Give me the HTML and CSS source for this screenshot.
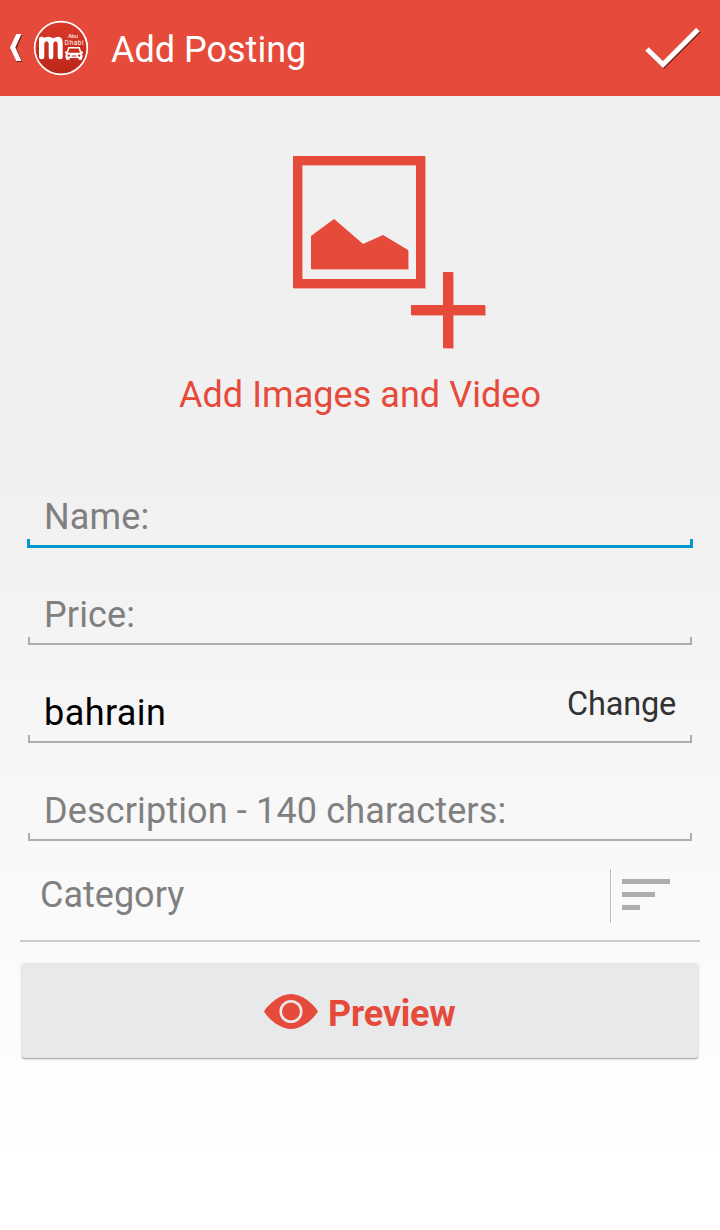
FILE: index.html
```html
<!DOCTYPE html>
<html lang="en">
<head>
<meta charset="utf-8">
<title>Add Posting</title>
<link rel="stylesheet" href="styles.css">
</head>
<body>
<header class="bar">
  <svg class="back" width="14" height="32" viewBox="0 0 14 32"><path d="M8 3h5.500L7.500 16.500 13.500 30H8L2 16.500z" fill="#6b241d"/><path d="M7.300 2h5.200L6.300 15.500 12.500 29H7.300L1 15.500z" fill="#fff"/></svg>
  <svg class="logo" width="56" height="56" viewBox="0 0 56 56">
    <defs><linearGradient id="disc" x1="0" y1="0" x2="0" y2="1"><stop offset="0" stop-color="#dc382b"/><stop offset="1" stop-color="#b92718"/></linearGradient></defs>
    <circle cx="28" cy="28" r="26.300" fill="url(#disc)" stroke="#fff" stroke-width="1.700"/>
    <path d="M5.300 18.500q0-2 2-2h1.200q1.500 0 1.800 1.300 5-3 9 .2 9.500-4.500 9.700 4.500v14q0 2.500-2.500 2.500t-2.500-2.500V23.500q0-2.500-2.200-2.500t-2.200 2.500v13q0 2.500-2.300 2.500t-2.300-2.500v-13q0-2.500-2.200-2.500t-2.200 2.500v13q0 2.500-2.600 2.500t-2.700-2.500z" fill="#fff" transform="translate(.7 .3)"/>
    <text class="logo-text" x="35" y="17.800" font-size="6" textLength="10">Abu</text>
    <text class="logo-text" x="31.600" y="25" font-size="6.600" textLength="19">Dhabi</text>
    <path d="M34.300 32.500l1.500-4.700h10.400l1.500 4.700" fill="none" stroke="#fff" stroke-width="1.500"/>
    <path d="M32 31.500h2.500v1.200h13v-1.200H50v1.700l-1.500.5 1 1.300v3H49v1.700h-3.500V38h-9v1.700H33V38h-.5v-3l1-1.300-1.500-.5z" fill="#fff"/>
    <circle cx="35.800" cy="35.600" r="1.200" fill="#c52d20"/><circle cx="46.200" cy="35.600" r="1.200" fill="#c52d20"/><path d="M38.500 36h5" stroke="#c52d20" stroke-width="1"/>
  </svg>
  <h1 class="title">Add Posting</h1>
  <svg class="done" width="56" height="44" viewBox="0 0 56 44"><path d="M3 23L19 38.500 54 3.500" fill="none" stroke="#6b241d" stroke-width="5"/><path d="M2 22L18 37.500 53 2.500" fill="none" stroke="#fff" stroke-width="5"/></svg>
</header>
<main class="page">
  <section class="media">
    <svg class="media-icon" width="194" height="194" viewBox="0 0 194 194">
      <g fill="#f1978d" transform="translate(.8 .8)"><path d="M0 0h132v132H0zM9 9v114h114V9z" fill-rule="evenodd"/><path d="M18 80L41 63 70 88 90 79 115 94v19H18z"/><path d="M150 116h10v33h32v10h-32v33h-10v-33h-32v-10h32z"/></g>
      <g fill="#e64a3a"><path d="M0 0h132v132H0zM9 9v114h114V9z" fill-rule="evenodd"/><path d="M18 80L41 63 70 88 90 79 115 94v19H18z"/><path d="M150 116h10v33h32v10h-32v33h-10v-33h-32v-10h32z"/></g>
    </svg>
    <p class="media-label">Add Images and Video</p>
  </section>
  <section class="fields">
    <div class="field active"><div class="row"><span class="hint">Name:</span></div><div class="bracket"></div></div>
    <div class="field"><div class="row"><span class="hint">Price:</span></div><div class="bracket"></div></div>
    <div class="field"><div class="row filled"><span class="value">bahrain</span><span class="change">Change</span></div><div class="bracket"></div></div>
    <div class="field"><div class="row"><span class="hint">Description - 140 characters:</span></div><div class="bracket"></div></div>
  </section>
  <section class="category">
    <span class="category-label">Category</span>
    <div class="sort"><i class="line long"></i><i class="line mid"></i><i class="line short"></i></div>
  </section>
  <div class="preview">
    <svg class="eye" width="54" height="35" viewBox="0 0 54 35"><path d="M0 17.500C5 9 17 0 27 0s22 9 27 17.500C49 26 37 35 27 35S5 26 0 17.500z" fill="#e64a3a"/><circle cx="27" cy="17.500" r="10.300" fill="none" stroke="#e8e9eb" stroke-width="2.600"/></svg>
    <span class="preview-label">Preview</span>
  </div>
</main>
</body>
</html>
```
FILE: styles.css
```css
* { box-sizing: border-box; }
body {
  margin: 0;
  height: 1230px;
  font: 36px/42px Roboto, sans-serif;
  color: #808080;
  background: #fff;
  overflow: hidden;
}
svg { display: block; flex: none; }
.bar {
  display: flex;
  align-items: flex-start;
  height: 96px;
  padding-left: 9px;
  background: #e64a3a;
}
.back { margin-top: 32px; }
.logo { margin: 20px 0 0 10px; }
.logo-text { font-family: Roboto, sans-serif; fill: #fff; }
.title { margin: 29px auto 0 22px; font-size: 36px; font-weight: 400; color: #fff; }
.done { margin: 27px 19px 0 0; }
.page {
  height: 1134px;
  background: linear-gradient(#f0f0f0 0, #f0f0f0 31%, #fff 93%);
}
.media { padding-top: 60px; height: 400px; color: #e64a3a; }
.media-icon { margin-left: 293px; }
.media-label { margin: 24px 0 0; text-align: center; letter-spacing: .05px; }
.field { height: 98px; padding: 0 28px; }
.row { display: flex; justify-content: space-between; padding: 0 16px; height: 43px; white-space: nowrap; }
.hint { letter-spacing: .14px; }
.value { letter-spacing: .42px; }
.filled { color: #000; }
.change { margin-top: -7px; font-size: 32.5px; line-height: 38px; letter-spacing: -.2px; color: #333; }
.bracket { height: 8px; border: solid #adadad; border-width: 0 2px 2px; }
.active .bracket { height: 9px; margin: 0 -1px; border-color: #0099cc; border-width: 0 3px 3px; }
.category {
  display: flex;
  justify-content: space-between;
  height: 80px;
  margin: -26px 20px 0;
  padding: 7px 30px 0 20px;
  border-bottom: 2px solid #ccc;
}
.category-label { margin-top: 5px; }
.sort {
  display: flex;
  flex-direction: column;
  gap: 8px;
  width: 60px;
  height: 54px;
  padding: 10px 0 0 11px;
  border-left: 1px solid #b7bfbf;
}
.line { height: 5px; background: #adadad; }
.long { width: 48px; }
.mid { width: 33px; }
.short { width: 18px; }
.preview {
  display: flex;
  height: 95px;
  margin: 21px 22px 0;
  padding: 31px 0 0 242px;
  border-radius: 3px;
  background: #e8e9eb;
  box-shadow: 0 1px 1px #aaa, 0 1px 3px rgba(0,0,0,.18);
}
.preview-label { margin: -1px 0 0 10px; font-weight: 700; letter-spacing: -.2px; color: #e64a3a; }
```
